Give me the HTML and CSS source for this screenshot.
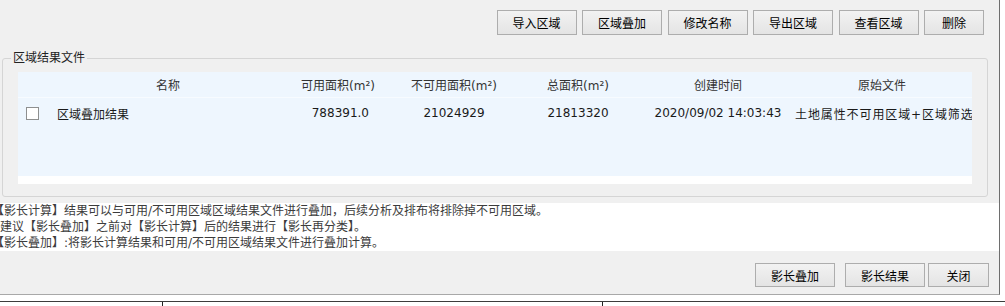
FILE: index.html
```html
<!DOCTYPE html>
<html lang="zh-CN">
<head>
    <meta charset="UTF-8">
    <link rel="stylesheet" href="styles.css">
    <title>区域结果文件</title>
</head>
<body>
    <div class="window">
        <div class="toolbar">
            <button class="btn">导入区域</button>
            <button class="btn">区域叠加</button>
            <button class="btn">修改名称</button>
            <button class="btn">导出区域</button>
            <button class="btn">查看区域</button>
            <button class="btn narrow">删除</button>
        </div>
        <fieldset class="group">
            <legend>区域结果文件</legend>
            <div class="list">
                <div class="rows">
                    <div class="row head">
                        <div class="cell"></div>
                        <div class="cell center">名称</div>
                        <div class="cell center">可用面积(m²)</div>
                        <div class="cell center">不可用面积(m²)</div>
                        <div class="cell center">总面积(m²)</div>
                        <div class="cell center">创建时间</div>
                        <div class="cell center">原始文件</div>
                    </div>
                    <div class="row item">
                        <div class="cell box"><span class="check"></span></div>
                        <div class="cell name">区域叠加结果</div>
                        <div class="cell num">788391.0</div>
                        <div class="cell center">21024929</div>
                        <div class="cell center">21813320</div>
                        <div class="cell center">2020/09/02 14:03:43</div>
                        <div class="cell src">土地属性不可用区域+区域筛选</div>
                    </div>
                </div>
            </div>
        </fieldset>
        <div class="notes">
            <p class="shift">【影长计算】结果可以与可用/不可用区域区域结果文件进行叠加，后续分析及排布将排除掉不可用区域。</p>
            <p>建议【影长叠加】之前对【影长计算】后的结果进行【影长再分类】。</p>
            <p class="shift">【影长叠加】:将影长计算结果和可用/不可用区域结果文件进行叠加计算。</p>
        </div>
        <div class="footer">
            <button class="btn">影长叠加</button>
            <button class="btn gap-l">影长结果</button>
            <button class="btn gap-s close">关闭</button>
        </div>
    </div>
    <div class="dock">
        <span class="tick"></span>
        <span class="tick far"></span>
    </div>
</body>
</html>
```

FILE: styles.css
```css
* {
  box-sizing: border-box;
}
body {
  margin: 0;
  width: 1005px;
  height: 306px;
  overflow: hidden;
  background: #fff;
  color: #000;
  font: 12px "DejaVu Sans", "Noto Sans CJK SC", sans-serif;
}
.window {
  width: 1000px;
  height: 295px;
  background: #f0f0f0;
  border-right: 1px solid #6e6e6e;
  border-bottom: 1px solid #a8a8a8;
}
.toolbar {
  display: flex;
  justify-content: flex-end;
  gap: 5.5px;
  height: 35px;
  padding: 10px 15px 0 0;
}
.btn {
  width: 80px;
  height: 25px;
  padding: 0;
  border: solid 1px #adadad;
  background: linear-gradient(#f2f2f2, #e4e4e4);
  color: #000;
  font: 12px "DejaVu Sans", "Noto Sans CJK SC", sans-serif;
}
.narrow {
  width: 60px;
}
.group {
  margin: 15px 11px 6px 2px;
  padding: 0;
  min-width: 0;
  border: solid 1px #d5d5d5;
  border-radius: 3px;
}
.group legend {
  margin-left: 8px;
  padding: 0 2px;
  line-height: 17px;
  color: #222;
}
.list {
  height: 112px;
  margin: 5px 15px 12px;
  background: #fff;
}
.rows {
  height: 104px;
  background: #eef6fe;
}
.row {
  display: grid;
  grid-template-columns: 38px 224px 116px 116px 132px 148px 180px;
  align-items: center;
  white-space: nowrap;
}
.head {
  height: 26px;
  border-bottom: 1px solid #f7fbff;
  color: #333;
}
.item {
  height: 30px;
  color: #1a1a1a;
}
.cell {
  overflow: hidden;
}
.center {
  text-align: center;
}
.box {
  padding-left: 8px;
  display: flex;
}
.check {
  width: 13px;
  height: 13px;
  border: solid 1px #8e8f8f;
  background: #fff;
}
.name {
  padding-left: 1px;
}
.num {
  text-align: right;
  padding-right: 27px;
}
.src {
  padding-left: 3px;
  letter-spacing: 0.9px;
}
.notes {
  height: 48px;
  background: #fff;
  color: #3c3c3c;
  line-height: 16px;
  white-space: nowrap;
  overflow: hidden;
}
.notes p {
  margin: 0;
}
.notes .shift {
  margin-left: -8px;
}
.footer {
  display: flex;
  justify-content: flex-end;
  height: 43px;
  padding: 12px 10px 0 0;
}
.footer .btn {
  height: 24px;
}
.gap-l {
  margin-left: 10px;
}
.gap-s {
  margin-left: 3px;
}
.close {
  width: 61px;
}
.dock {
  display: flex;
  height: 5px;
  margin-top: 6px;
  padding-left: 162px;
  border-top: 1px solid #3c3c3c;
}
.tick {
  width: 1px;
  height: 4px;
  background: #222;
}
.far {
  margin-left: 439px;
}
```
